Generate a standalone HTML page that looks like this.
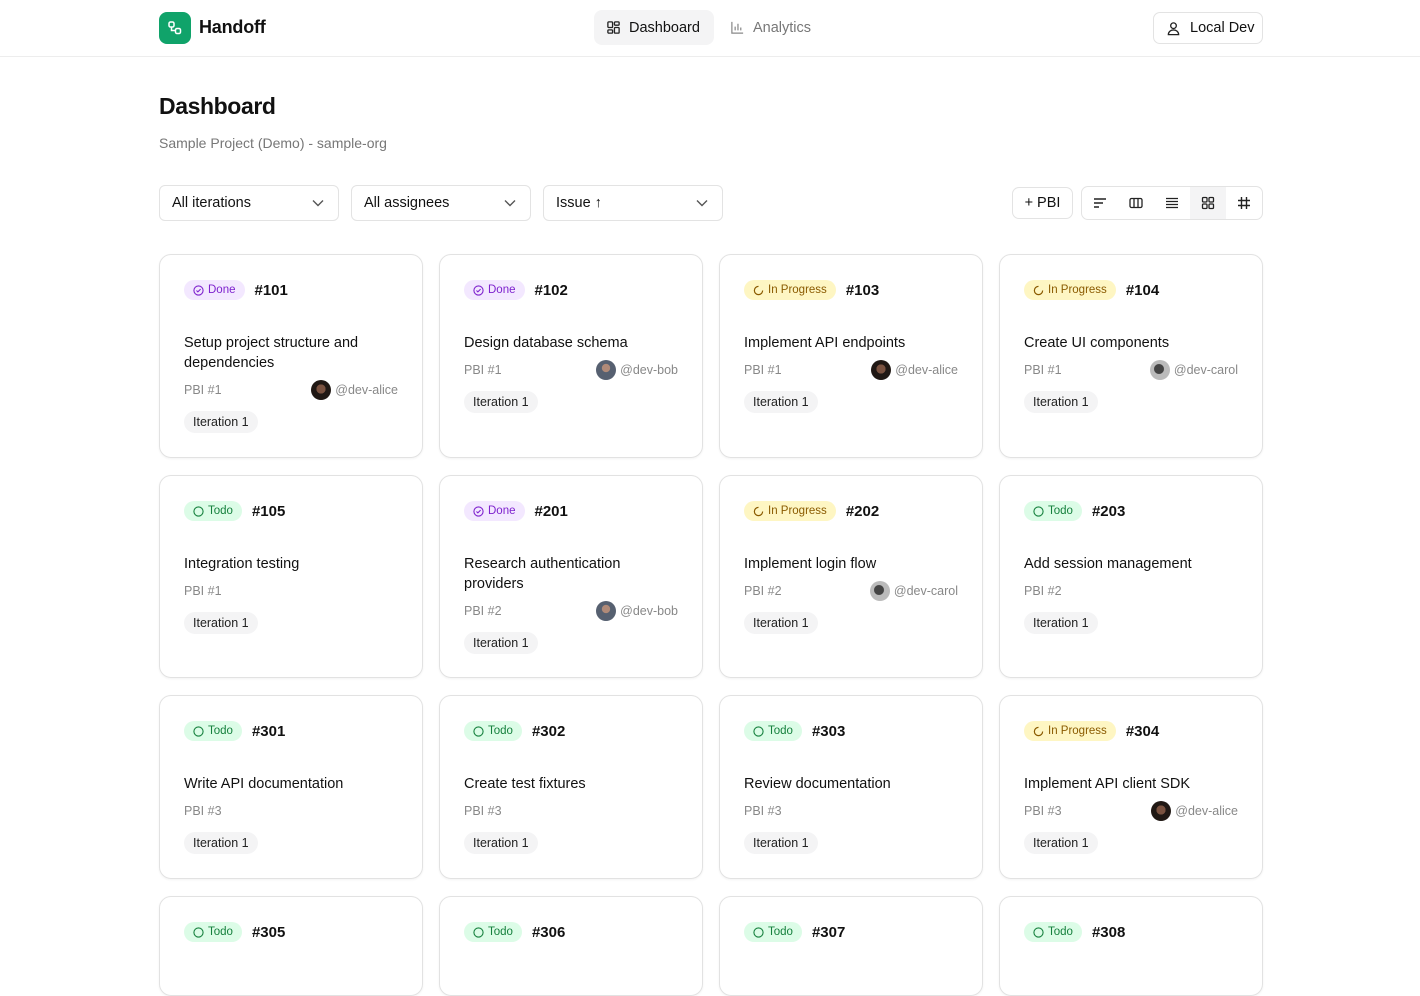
<!DOCTYPE html>
<html><head><meta charset="utf-8"><style>
*{box-sizing:border-box;margin:0;padding:0}
body{width:1420px;height:954px;overflow:hidden;background:#fff;font-family:"Liberation Sans",sans-serif;color:#111}
.hdr{height:57px;border-bottom:1px solid #ededed;position:relative}
.logo{position:absolute;left:159px;top:12px;width:32px;height:32px;border-radius:8px;background:#10a36a;display:flex;align-items:center;justify-content:center}
.brand{position:absolute;left:199px;top:17px;font-size:18px;font-weight:bold;letter-spacing:-.2px}
.nav{position:absolute;top:10px;height:35px;display:flex;align-items:center;gap:8px;font-size:14.5px;padding:0 12px;border-radius:8px}
.n1{left:594px;width:120px;background:#f4f4f5;color:#111}
.n2{left:718px;color:#777}
.ld{position:absolute;left:1153px;top:12px;width:110px;height:32px;border:1px solid #e3e3e3;border-radius:7px;display:flex;align-items:center;gap:9px;padding-left:12px;font-size:14.5px}
h1{position:absolute;left:159px;top:93px;font-size:23px;font-weight:bold;letter-spacing:-.4px}
.sub{position:absolute;left:159px;top:135px;font-size:14px;color:#777}
.sel{position:absolute;top:185px;width:180px;height:36px;border:1px solid #e3e3e3;border-radius:6px;font-size:14.5px;display:flex;align-items:center;padding-left:12px}
.sel svg{position:absolute;right:14px;top:13px}
.pbi{position:absolute;left:1012px;top:187px;width:61px;height:32px;border:1px solid #e3e3e3;border-radius:7px;font-size:14.5px;display:flex;align-items:center;justify-content:center}
.vw{position:absolute;left:1081px;top:186px;width:182px;height:34px;border:1px solid #e3e3e3;border-radius:7px;display:flex;overflow:hidden}
.vw div{flex:1;display:flex;align-items:center;justify-content:center}
.vw .on{background:#f4f4f5}
.card{position:absolute;width:264px;border:1px solid #e2e2e2;border-radius:12px;padding:25px 24px 0 24px;box-shadow:0 1px 2px rgba(0,0,0,.05)}
.top{display:flex;align-items:center;gap:10px;height:20px}
.b{height:20px;border-radius:10px;font-size:11.5px;display:inline-flex;align-items:center;gap:4px;padding:0 9px}
.done{background:#f3e8ff;color:#7e22ce}
.prog{background:#fef6c3;color:#8a5a00}
.todo{background:#dcfce7;color:#15803d}
.num{font-size:15px;font-weight:bold}
.t{font-size:14.5px;line-height:20px;margin-top:33px}
.m{display:flex;justify-content:space-between;align-items:center;height:20px;margin-top:7px;font-size:12.5px;color:#888}
.u{display:flex;align-items:center;gap:4px}
.av{width:20px;height:20px;border-radius:50%}
.a{background:radial-gradient(circle at 50% 45%,#7a5240 0 30%,#201814 32%)}
.bo{background:radial-gradient(circle at 50% 40%,#b08a78 0 25%,#566070 28%)}
.c{background:radial-gradient(circle at 45% 45%,#444 0 30%,#bbb 34%)}
.chip{display:inline-block;margin-top:11px;height:22px;line-height:22px;padding:0 9px;border-radius:11px;background:#f4f4f5;font-size:12.5px;color:#222}
</style></head><body>
<div class="hdr">
<div class="logo"><svg width="16" height="16" viewBox="0 0 16 16" fill="none" stroke="#fff" stroke-width="1.5"><rect x="2" y="2" width="5" height="5" rx="1.5"/><rect x="8.5" y="8.5" width="5" height="5" rx="1.5"/><path d="M4.5 7v3.5h4"/></svg></div>
<div class="brand">Handoff</div>
<div class="nav n1"><svg width="15" height="15" viewBox="0 0 16 16" fill="none" stroke="#222" stroke-width="1.4"><rect x="2" y="2" width="5" height="6" rx="1"/><rect x="9" y="2" width="5" height="3.5" rx="1"/><rect x="9" y="8" width="5" height="6" rx="1"/><rect x="2" y="10.5" width="5" height="3.5" rx="1"/></svg>Dashboard</div>
<div class="nav n2"><svg width="15" height="15" viewBox="0 0 16 16" fill="none" stroke="#888" stroke-width="1.3"><path d="M2 2v12h12M5.5 11V7M8.5 11V4M11.5 11V8"/></svg>Analytics</div>
<div class="ld"><svg width="15" height="15" viewBox="0 0 16 16" fill="none" stroke="#222" stroke-width="1.4"><circle cx="8" cy="5" r="3"/><path d="M2.5 14.5c0-3 2.5-5 5.5-5s5.5 2 5.5 5z"/></svg>Local Dev</div>
</div>
<h1>Dashboard</h1>
<div class="sub">Sample Project (Demo) - sample-org</div>
<div class="sel" style="left:159px">All iterations<svg width="12" height="8" viewBox="0 0 12 8" fill="none" stroke="#555" stroke-width="1.4"><path d="M1 1.5l5 5 5-5"/></svg></div>
<div class="sel" style="left:351px">All assignees<svg width="12" height="8" viewBox="0 0 12 8" fill="none" stroke="#555" stroke-width="1.4"><path d="M1 1.5l5 5 5-5"/></svg></div>
<div class="sel" style="left:543px">Issue ↑<svg width="12" height="8" viewBox="0 0 12 8" fill="none" stroke="#555" stroke-width="1.4"><path d="M1 1.5l5 5 5-5"/></svg></div>
<div class="pbi">+ PBI</div>
<div class="vw">
<div><svg width="14" height="14" viewBox="0 0 14 14" stroke="#222" stroke-width="1.4"><path d="M1 3h12M1 7h9M1 11h5"/></svg></div>
<div><svg width="14" height="14" viewBox="0 0 14 14" fill="none" stroke="#222" stroke-width="1.3"><rect x="1" y="2.5" width="12" height="9" rx="1.5"/><path d="M5 2.5v9M9 2.5v9"/></svg></div>
<div><svg width="14" height="14" viewBox="0 0 14 14" stroke="#222" stroke-width="1.3"><path d="M1 2.5h12M1 5.5h12M1 8.5h12M1 11.5h12"/></svg></div>
<div class="on"><svg width="14" height="14" viewBox="0 0 14 14" fill="none" stroke="#222" stroke-width="1.3"><rect x="1.5" y="1.5" width="4.5" height="4.5" rx="1"/><rect x="8" y="1.5" width="4.5" height="4.5" rx="1"/><rect x="1.5" y="8" width="4.5" height="4.5" rx="1"/><rect x="8" y="8" width="4.5" height="4.5" rx="1"/></svg></div>
<div><svg width="14" height="14" viewBox="0 0 14 14" stroke="#222" stroke-width="1.4"><path d="M4.5 1v12M9.5 1v12M1 4.5h12M1 9.5h12"/></svg></div>
</div>
<div id="g"></div>
<script>
const D='<svg width="11" height="11" viewBox="0 0 12 12" fill="none" stroke="currentColor" stroke-width="1.2"><circle cx="6" cy="6" r="5"/><path d="M3.8 6l1.5 1.5 3-3"/></svg>Done';
const P='<svg width="11" height="11" viewBox="0 0 12 12" fill="none" stroke="currentColor" stroke-width="1.3"><path d="M10.5 6A4.5 4.5 0 1 1 6 1.5"/></svg>In Progress';
const T='<svg width="11" height="11" viewBox="0 0 12 12" fill="none" stroke="currentColor" stroke-width="1.2"><circle cx="6" cy="6" r="5"/></svg>Todo';
const S={d:['done',D],p:['prog',P],t:['todo',T]};
const cards=[
['d','101','Setup project structure and dependencies','1','a','alice'],
['d','102','Design database schema','1','bo','bob'],
['p','103','Implement API endpoints','1','a','alice'],
['p','104','Create UI components','1','c','carol'],
['t','105','Integration testing','1'],
['d','201','Research authentication providers','2','bo','bob'],
['p','202','Implement login flow','2','c','carol'],
['t','203','Add session management','2'],
['t','301','Write API documentation','3'],
['t','302','Create test fixtures','3'],
['t','303','Review documentation','3'],
['p','304','Implement API client SDK','3','a','alice'],
['t','305','','3'],['t','306','','3'],['t','307','','3'],['t','308','','3']];
const tops=[254,475,695,896],hs=[204,203,184,100];
let h='';
cards.forEach((c,i)=>{const r=Math.floor(i/4),col=i%4;const s=S[c[0]];
h+=`<div class="card" style="left:${159+col*280}px;top:${tops[r]}px;height:${hs[r]}px"><div class="top"><span class="b ${s[0]}">${s[1]}</span><span class="num">#${c[1]}</span></div>`;
if(c[2]){h+=`<div class="t">${c[2]}</div><div class="m"><span>PBI #${c[3]}</span>${c[4]?`<span class="u"><span class="av ${c[4]}"></span>@dev-${c[5]}</span>`:''}</div><span class="chip">Iteration 1</span>`;}
h+='</div>';});
document.getElementById('g').innerHTML=h;
</script>
</body></html>
